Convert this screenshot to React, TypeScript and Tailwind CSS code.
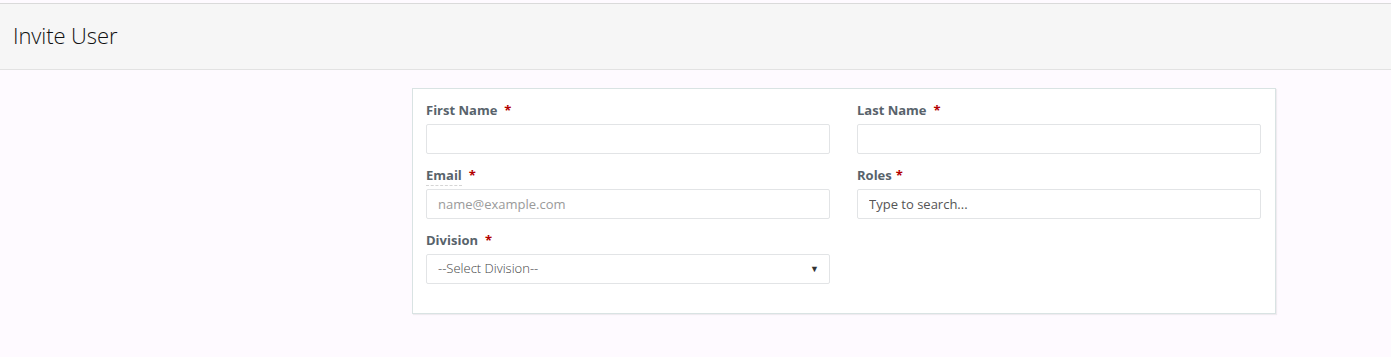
import React from 'react';

const font = { fontFamily: '"Open Sans", "Segoe UI", Arial, sans-serif' };

function Label({ text, tight, dashed }: { text: string; tight?: boolean; dashed?: boolean }) {
  return (
    <label className="block mb-[4px] text-[13px] leading-[19px] font-bold text-[#58636b]">
      <span className={dashed ? 'border-b border-dashed border-[#d5d5d5] pb-[1px]' : ''}>{text}</span>
      <span className={`text-[#b30000] ${tight ? 'ml-[4px]' : 'ml-[7px]'}`}>*</span>
    </label>
  );
}

function Field({ label, tight, dashed, children }: { label: string; tight?: boolean; dashed?: boolean; children: React.ReactNode }) {
  return (
    <div className="mb-[12px]">
      <Label text={label} tight={tight} dashed={dashed} />
      {children}
    </div>
  );
}

const inputCls =
  'block w-full h-[30px] border border-[#e2e4e6] rounded-[2px] bg-white px-[11px] text-[13px] text-[#444] outline-none placeholder:text-[#9a9a9a]';

export default function App() {
  return (
    <div style={font} className="min-h-[357px] bg-[#fefaff] pt-[3px]">
      {/* Header */}
      <div className="h-[67px] bg-[#f6f6f6] border-t border-[#dadada] border-b border-b-[#e2e2e2] flex items-center px-[13px]">
        <h1 className="text-[22px] font-light text-[#111] tracking-[-0.1px] -mt-[2px]">Invite User</h1>
      </div>

      {/* Form card */}
      <div className="pt-[18px]">
        <div className="ml-[412px] w-[864px] bg-white border border-[#d9e3e3] shadow-[1px_1px_1px_rgba(0,0,0,0.06)] px-[13px] pt-[12px] pb-[17px]">
          <div className="grid grid-cols-2 gap-x-[27px] w-[835px]">
            <Field label="First Name">
              <input className={inputCls} />
            </Field>
            <Field label="Last Name">
              <input className={inputCls} />
            </Field>
            <Field label="Email" dashed>
              <input className={inputCls} placeholder="name@example.com" />
            </Field>
            <Field label="Roles" tight>
              <input className={`${inputCls} placeholder:text-[#555]`} placeholder="Type to search..." />
            </Field>
            <Field label="Division">
              <div className={`${inputCls} flex items-center justify-between`}>
                <span className="text-[#444] font-light">--Select Division--</span>
                <span className="text-[9px] text-[#333] mr-[-1px]">▼</span>
              </div>
            </Field>
          </div>
        </div>
      </div>
    </div>
  );
}
